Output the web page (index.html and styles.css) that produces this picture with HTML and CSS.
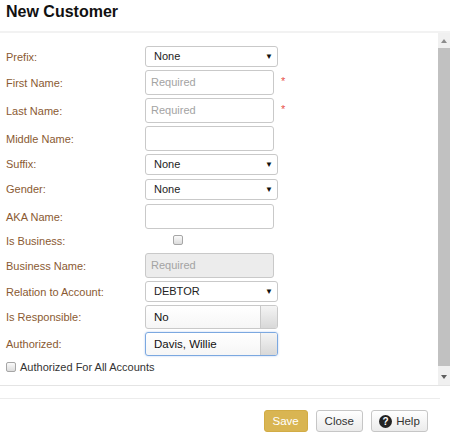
FILE: index.html
```html
<!DOCTYPE html>
<html>
  <head>
    <link rel="stylesheet" href="styles.css">
  </head>
  <body>
    <div class="dialog">
      <div class="dialog-header">
        <h1>New Customer</h1>
      </div>
      <div class="dialog-body">
        <div class="form">
          <div class="row h21">
            <label>Prefix:</label>
            <div class="select">None<span class="caret">&#9660;</span></div>
          </div>
          <div class="row h25">
            <label>First Name:</label>
            <div class="input placeholder">Required</div>
            <span class="req">*</span>
          </div>
          <div class="row h25">
            <label>Last Name:</label>
            <div class="input placeholder">Required</div>
            <span class="req">*</span>
          </div>
          <div class="row h25">
            <label>Middle Name:</label>
            <div class="input"></div>
          </div>
          <div class="row h22">
            <label>Suffix:</label>
            <div class="select">None<span class="caret">&#9660;</span></div>
          </div>
          <div class="row h22">
            <label>Gender:</label>
            <div class="select">None<span class="caret">&#9660;</span></div>
          </div>
          <div class="row h25">
            <label>AKA Name:</label>
            <div class="input"></div>
          </div>
          <div class="row h18">
            <label>Is Business:</label>
            <span class="checkbox cb-field"></span>
          </div>
          <div class="row h25">
            <label>Business Name:</label>
            <div class="input placeholder disabled">Required</div>
          </div>
          <div class="row h21">
            <label>Relation to Account:</label>
            <div class="select">DEBTOR<span class="caret">&#9660;</span></div>
          </div>
          <div class="row h24">
            <label>Is Responsible:</label>
            <div class="combo"><span class="combo-text">No</span><span class="combo-btn"></span></div>
          </div>
          <div class="row h24">
            <label>Authorized:</label>
            <div class="combo focused"><span class="combo-text">Davis, Willie</span><span class="combo-btn"></span></div>
          </div>
          <div class="check-row">
            <span class="checkbox"></span>
            <span>Authorized For All Accounts</span>
          </div>
        </div>
        <div class="scrollbar">
          <div class="sb-arrow up"></div>
          <div class="sb-thumb"></div>
          <div class="sb-arrow down"></div>
        </div>
      </div>
      <div class="dialog-footer">
        <button class="btn btn-save">Save</button>
        <button class="btn">Close</button>
        <button class="btn btn-help">
          <svg width="13" height="13" viewBox="0 0 13 13">
            <circle cx="6.5" cy="6.5" r="6.5" fill="#222"/>
            <text x="6.5" y="10.2" text-anchor="middle" font-family="Liberation Sans, sans-serif" font-weight="bold" font-size="10" fill="#fff">?</text>
          </svg>
          Help
        </button>
      </div>
    </div>
  </body>
</html>
```

FILE: styles.css
```css
* {
  box-sizing: border-box;
}

body {
  margin: 0;
  background: #fff;
  font-family: 'Liberation Sans', Arial, sans-serif;
  font-size: 11px;
  color: #333;
}

.dialog {
  width: 450px;
  height: 434px;
  display: flex;
  flex-direction: column;
}

.dialog-header {
  height: 33px;
  padding: 0 6px;
  display: flex;
  align-items: center;
  border-bottom: 2px solid #f2f2f2;
}

.dialog-header h1 {
  margin: 0;
  font-size: 16px;
  font-weight: bold;
  color: #111;
  padding-bottom: 7px;
}

.dialog-body {
  height: 353px;
  display: flex;
  border-bottom: 1px solid #e4e4e4;
}

.form {
  flex: 1;
  padding: 13px 0 0 6px;
  display: flex;
  flex-direction: column;
  gap: 3px;
  overflow: hidden;
}

.row {
  display: flex;
  align-items: center;
}

.h18 { height: 18px; }
.h21 { height: 21px; }
.h22 { height: 22px; align-items: flex-start; }
.h22 label { line-height: 21px; }
.h24 { height: 24px; }
.h25 { height: 25px; }

.row label {
  width: 139px;
  color: #8a5a32;
}

.input {
  width: 129px;
  height: 25px;
  border: 1px solid #c9c9c9;
  border-radius: 3px;
  padding-left: 5px;
  line-height: 23px;
  background: #fff;
}

.placeholder {
  color: #a3a3a3;
}

.disabled {
  background: #ececec;
}

.req {
  color: #e8504a;
  margin-left: 7px;
  margin-top: -3px;
  font-size: 11px;
}

.select {
  position: relative;
  width: 133px;
  height: 21px;
  border: 1px solid #c9c9c9;
  border-radius: 3px;
  padding-left: 8px;
  line-height: 19px;
  color: #222;
  background: #fff;
}

.caret {
  position: absolute;
  right: 4px;
  top: 0;
  font-size: 8px;
  color: #111;
}

.combo {
  width: 133px;
  height: 24px;
  border: 1px solid #c9c9c9;
  border-radius: 3px;
  display: flex;
  background: linear-gradient(#fff, #f6f6f6);
  overflow: hidden;
}

.combo.focused {
  border-color: #7ba8e0;
  box-shadow: 0 0 2px rgba(102, 150, 230, 0.5);
}

.combo-text {
  flex: 1;
  padding-left: 8px;
  line-height: 22px;
  color: #111;
  font-size: 11.5px;
}

.combo-btn {
  width: 17px;
  border-left: 1px solid #c9c9c9;
  background: linear-gradient(#f4f4f4, #e6e6e6 50%, #d8d8d8);
}

.checkbox {
  display: inline-block;
  width: 10px;
  height: 10px;
  border: 1px solid #a6a6a6;
  border-radius: 2px;
  background: linear-gradient(#fafafa, #dcdcdc);
}

.cb-field {
  margin-left: 28px;
  margin-top: -2px;
}

.check-row {
  display: flex;
  align-items: center;
  gap: 4px;
  height: 16px;
  color: #333;
  font-size: 11px;
}

.scrollbar {
  width: 12px;
  background: #f0f0f0;
  display: flex;
  flex-direction: column;
}

.sb-arrow {
  height: 15px;
  position: relative;
}

.sb-arrow::after {
  content: '';
  position: absolute;
  left: 3px;
  border-left: 3px solid transparent;
  border-right: 3px solid transparent;
}

.sb-arrow.up::after {
  top: 6px;
  border-bottom: 4px solid #8c8c8c;
}

.sb-arrow.down {
  height: 19px;
}

.sb-arrow.down::after {
  top: 9px;
  border-top: 4px solid #5e5e5e;
}

.sb-thumb {
  flex: 1;
  background: #c1c1c1;
}

.dialog-footer {
  flex: 1;
  margin-top: 12px;
  width: 440px;
  border-top: 1px solid #ececec;
  display: flex;
  justify-content: flex-end;
  align-items: flex-start;
  gap: 8px;
  padding: 11px 12px 0 0;
}

.btn {
  height: 22px;
  padding: 0 8px;
  border: 1px solid #c6c6c6;
  border-radius: 3px;
  background: linear-gradient(#ffffff, #ebebeb);
  font-family: 'Liberation Sans', Arial, sans-serif;
  font-size: 11.5px;
  color: #333;
  display: flex;
  align-items: center;
  gap: 4px;
}

.btn-save {
  width: 44px;
  justify-content: center;
  background: #d9b552;
  border-color: #d2ac45;
  color: #fff;
}

.btn-help {
  width: 57px;
  padding: 0 6px;
  justify-content: center;
}
```
